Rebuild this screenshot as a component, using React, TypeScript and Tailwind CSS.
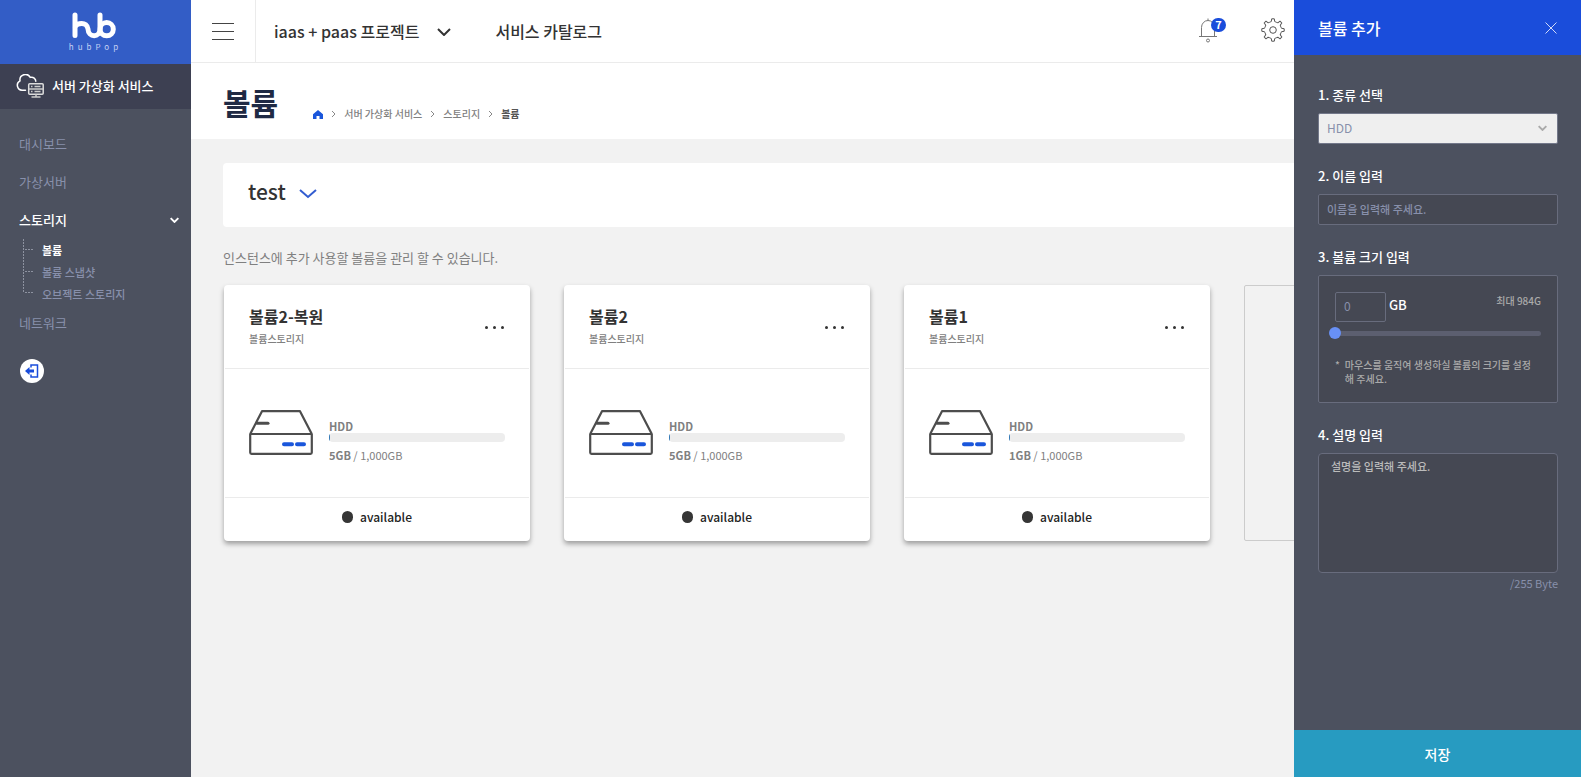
import { useState } from "react";

const volumes = [
  { name: "볼륨2-복원", used: 5 },
  { name: "볼륨2", used: 5 },
  { name: "볼륨1", used: 1 },
];

function Chevron({ className }: { className: string }) {
  return (
    <svg viewBox="0 0 14 8" className={className} fill="none" stroke="currentColor" aria-hidden="true">
      <path d="M1 1l6 6 6-6" />
    </svg>
  );
}

function Logo() {
  return (
    <svg viewBox="0 0 44 27" className="h-[27px] w-11" fill="none" stroke="#fff" strokeWidth="5" strokeLinecap="round" aria-label="hub" role="img">
      <path d="M3 3v20.500M3 15.500c1.500-5 12-6.500 13 1.500 .3 9 12 9 12 0V3" />
      <circle cx="34.700" cy="17.200" r="6.600" />
    </svg>
  );
}

function CloudServerIcon() {
  return (
    <svg viewBox="0 0 28 24" className="h-6 w-7 shrink-0" fill="none" stroke="#fff" strokeWidth="1.500" aria-hidden="true">
      <path d="M9.500 16.200H6a5 5 0 0 1-2-9.400 5.500 5.500 0 0 1 10.300-3.400c3-.8 5.500 1.200 5.500 3.900" strokeLinecap="round" />
      <rect x="12.700" y="9.700" width="14.500" height="10.500" rx="1" stroke="#ddd" />
      <path d="M13 15h14M20 20v2.500M15.500 23h9M18.500 12.400h6M18.500 17.500h6M15 12.400h1.500M15 17.500h1.500" stroke="#ccc" />
    </svg>
  );
}

function BellIcon() {
  return (
    <svg viewBox="0 0 18 25" className="h-[25px] w-[18px]" fill="none" stroke="#777" aria-hidden="true">
      <path d="M9 .5v2M2.500 18V9.500a6.500 7 0 0 1 13 0V18M0 18.500h18" />
      <circle cx="9" cy="22.500" r="1.500" />
    </svg>
  );
}

const gearTeeth = [0, 45, 90, 135, 180, 225, 270, 315];

function GearIcon() {
  return (
    <svg viewBox="0 0 24 24" className="h-6 w-6" fill="none" stroke="#555" strokeLinejoin="round" aria-hidden="true">
      {gearTeeth.map((angle) => (
        <path key={angle} d="M8.750 4.150Q10 3.700 10.300 3.500L10.700 .8h2.600l.4 2.700Q14 3.700 15.250 4.150" transform={`rotate(${angle} 12 12)`} />
      ))}
      <circle cx="12" cy="12" r="3.300" />
    </svg>
  );
}

function DiskIcon() {
  return (
    <svg viewBox="0 0 64 45" className="h-[45px] w-16 shrink-0" fill="none" stroke="#4d4d4d" strokeWidth="2.200" strokeLinejoin="round" aria-hidden="true">
      <path d="M1.200 24v18.500a1.300 1.300 0 0 0 1.300 1.300h59a1.300 1.300 0 0 0 1.300-1.300V24zM1.200 24L13 1.200h38L62.800 24" />
      <path d="M8 13.300h11" strokeWidth="3" strokeLinecap="round" />
      <path d="M35 34.200h8M48 34.200h7" stroke="#1a56db" strokeWidth="4" strokeLinecap="round" />
    </svg>
  );
}

function Sidebar() {
  const link = "block text-[13px] leading-[38px] text-[#8890ab]";
  return (
    <aside className="flex w-[191px] shrink-0 flex-col bg-[#4c515f]">
      <a href="#home" className="flex h-16 flex-col items-center bg-[#335dc6] pr-1 pt-3 text-white">
        <Logo />
        <span className="mt-1 pl-1 text-[8px] leading-[8px] tracking-[4px] text-[#c5d2f5]">hubPop</span>
      </a>
      <div className="flex h-[45px] items-center gap-2 bg-[#3d4052] pb-[2px] pl-4 text-[13px] font-medium text-white">
        <CloudServerIcon />
        <span>서버 가상화 서비스</span>
      </div>
      <nav className="px-[19px] pt-4">
        <a href="#dashboard" className={link}>대시보드</a>
        <a href="#servers" className={link}>가상서버</a>
        <a href="#storage" className="flex items-center justify-between text-[13px] font-medium leading-[38px] text-white">
          스토리지
          <Chevron className="-mr-[7px] h-[6px] w-[9px] stroke-[3]" />
        </a>
        <ul className="flex pb-2 text-[11px] font-medium leading-[22px] text-[#8890ab]">
          <li aria-hidden="true">
            <svg viewBox="0 0 11 66" className="ml-1 h-[66px] w-[11px]" fill="none" stroke="#8d92a0" strokeDasharray="2 1">
              <path d="M.5 0v54M2 10.500h9M2 32.500h9M2 53.500h9" />
            </svg>
          </li>
          <li className="pl-2">
            <a href="#volume" className="block font-bold text-white">볼륨</a>
            <a href="#snapshot" className="block">볼륨 스냅샷</a>
            <a href="#object" className="block">오브젝트 스토리지</a>
          </li>
        </ul>
        <a href="#network" className="block text-[13px] leading-5 text-[#8890ab]">네트워크</a>
        <button aria-label="나가기" className="ml-px mt-[26px] flex h-6 w-6 items-center justify-center rounded-full bg-white">
          <svg viewBox="0 0 14 14" className="h-3.5 w-3.5" fill="none" stroke="#1a4ddb" strokeWidth="1.500" aria-hidden="true">
            <path d="M6 3.500V1h6.500v12H6v-2.500" />
            <path d="M0 7l4.500-4v2.500H9v3H4.500V11z" fill="#1a4ddb" stroke="none" />
          </svg>
        </button>
      </nav>
    </aside>
  );
}

function TopBar() {
  return (
    <header className="flex h-[63px] items-center border-b border-[#ebebeb] bg-white text-[#333]">
      <button aria-label="메뉴" className="flex h-full w-[65px] flex-col justify-center gap-[7px] border-r border-[#ebebeb] px-[21px]">
        <span className="h-px w-[22px] bg-[#444]" />
        <span className="h-px w-[22px] bg-[#444]" />
        <span className="h-px w-[22px] bg-[#444]" />
      </button>
      <button className="ml-[18px] flex items-center gap-[18px] text-base font-medium">
        iaas + paas 프로젝트
        <Chevron className="mt-[2px] h-2 w-3.5 stroke-2" />
      </button>
      <a href="#catalog" className="ml-11 text-base font-medium">서비스 카탈로그</a>
      <div className="ml-auto flex items-center gap-11 pb-[2px] pr-[296px]">
        <button aria-label="알림 7" className="relative">
          <BellIcon />
          <span className="absolute -right-[9px] top-0 flex h-3.5 w-[15px] items-center justify-center rounded-full bg-[#1a4ddb] text-[11px] font-bold text-white">7</span>
        </button>
        <button aria-label="설정"><GearIcon /></button>
      </div>
    </header>
  );
}

function CrumbArrow() {
  return <Chevron className="mx-[7px] h-1 w-[7px] -rotate-90 stroke-2 text-[#888]" />;
}

function Breadcrumb() {
  return (
    <nav aria-label="경로" className="flex items-center text-[10px] font-medium leading-[14px] text-[#808080]">
      <a href="#home" aria-label="홈">
        <svg viewBox="0 0 10 9" className="h-[9px] w-2.5" fill="#1a56db" aria-hidden="true">
          <path d="M5 0l5 4.300V9H6.500V6h-3v3H0V4.300z" />
        </svg>
      </a>
      <CrumbArrow />
      <a href="#iaas">서버 가상화 서비스</a>
      <CrumbArrow />
      <a href="#storage">스토리지</a>
      <CrumbArrow />
      <span className="font-bold text-[#555]">볼륨</span>
    </nav>
  );
}

function VolumeCard({ name, used }: { name: string; used: number }) {
  return (
    <article className="flex h-64 flex-col rounded bg-white px-px shadow-[0_3px_5px_rgba(0,0,0,0.35)]">
      <div className="flex h-[84px] items-center justify-between border-b border-[#ebebeb] px-6">
        <div>
          <h2 className="text-base font-bold leading-6 text-[#333]">{name}</h2>
          <p className="text-[10px] font-medium leading-[22px] text-[#808080]">볼륨스토리지</p>
        </div>
        <button aria-label={name + " 더보기"} className="mr-px flex gap-[5px] pt-[2px]">
          <span className="h-[3px] w-[3px] rounded-full bg-[#333]" />
          <span className="h-[3px] w-[3px] rounded-full bg-[#333]" />
          <span className="h-[3px] w-[3px] rounded-full bg-[#333]" />
        </button>
      </div>
      <div className="flex flex-1 items-center gap-4 border-b border-[#ebebeb] px-6 pb-[2px]">
        <DiskIcon />
        <div className="flex-1 pt-4 text-[11px] leading-[14px] text-[#808080]">
          <p className="font-bold">HDD</p>
          <div className="h-[9px] overflow-hidden rounded bg-[#ededed]">
            <div className="h-full bg-[#337ab7]" style={{ width: `${used / 10}%` }} />
          </div>
          <p className="pt-[6px]"><b>{used}GB</b> / 1,000GB</p>
        </div>
      </div>
      <div className="flex h-[43px] items-center justify-center gap-[7px] pb-[6px] text-xs font-medium text-[#222]">
        <span className="h-3 w-[11px] rounded-full bg-[#363636]" />
        available
      </div>
    </article>
  );
}

function Drawer() {
  const [size, setSize] = useState(0);
  const label = "block text-[13px] font-medium leading-5 text-white";
  return (
    <aside className="absolute inset-y-0 right-0 flex w-[287px] flex-col bg-[#4c515f]">
      <div className="flex h-[55px] items-center justify-between bg-[#1a4ddb] px-6 text-white">
        <h2 className="text-base font-medium">볼륨 추가</h2>
        <button aria-label="닫기">
          <svg viewBox="0 0 12 12" className="h-3 w-3" stroke="currentColor" strokeWidth=".8" aria-hidden="true">
            <path d="M.5 .5l11 11M11.500 .5l-11 11" />
          </svg>
        </button>
      </div>
      <form className="flex flex-1 flex-col pl-6 pr-[23px] pt-[30px]">
        <label htmlFor="kind" className={label}>1. 종류 선택</label>
        <div className="relative mt-2">
          <select id="kind" className="block h-[31px] w-full appearance-none rounded-[2px] border border-[#73788a] bg-[#efefef] px-2 pb-[2px] text-xs text-[#8890ab]">
            <option>HDD</option>
          </select>
          <Chevron className="pointer-events-none absolute right-[11px] top-3 h-[6px] w-[9px] stroke-[3] text-[#aaa]" />
        </div>
        <label htmlFor="name" className={label + " mt-[22px]"}>2. 이름 입력</label>
        <input id="name" placeholder="이름을 입력해 주세요." className="mt-2 h-[31px] w-full rounded-[2px] border border-[#686c7d] bg-[#454853] px-2 pb-[2px] text-[11px] font-medium placeholder:text-[#8890ab]" />
        <label htmlFor="size" className={label + " mt-[22px]"}>3. 볼륨 크기 입력</label>
        <div className="mt-2 h-32 rounded-[2px] border border-[#686c7d] bg-[#454853] px-4 pt-4">
          <div className="flex items-start">
            <input id="size" value={size} onChange={(e) => setSize(Number(e.target.value) || 0)} className="h-[30px] w-[51px] rounded-[2px] border border-[#686c7d] bg-transparent px-2 pb-[3px] text-xs text-[#8890ab]" />
            <span className="pl-[3px] pt-[3px] text-[13px] font-medium leading-5 text-white">GB</span>
            <span className="ml-auto text-[10px] font-medium leading-[18px] text-[#aaa]">최대 984G</span>
          </div>
          <div className="relative mt-[9px] h-[5px] rounded-full bg-[#5c5f70]">
            <input
              type="range"
              aria-label="볼륨 크기"
              min={0}
              max={984}
              value={size}
              onChange={(e) => setSize(Number(e.target.value))}
              className="absolute -left-[6px] -top-[4px] h-3 w-[calc(100%+12px)] appearance-none bg-transparent [&::-webkit-slider-thumb]:h-3 [&::-webkit-slider-thumb]:w-3 [&::-webkit-slider-thumb]:appearance-none [&::-webkit-slider-thumb]:rounded-full [&::-webkit-slider-thumb]:bg-[#6890f5]"
            />
          </div>
          <p className="mt-[22px] flex gap-[5px] pr-1 text-[10px] font-medium leading-[14px] text-[#aaa]">
            <span>*</span>
            <span>마우스를 움직여 생성하실 볼륨의 크기를 설정해 주세요.</span>
          </p>
        </div>
        <label htmlFor="memo" className={label + " mt-[22px]"}>4. 설명 입력</label>
        <textarea id="memo" placeholder="설명을 입력해 주세요." className="mt-2 h-[120px] w-full resize-none rounded border border-[#686c7d] bg-[#454853] px-3 py-1 text-[11px] font-medium leading-4 placeholder:text-[#bbb]" />
        <p className="text-right text-[11px] leading-5 text-[#8890ab]">/255 Byte</p>
      </form>
      <button className="h-[47px] bg-[#279bc1] text-sm font-medium text-white">저장</button>
    </aside>
  );
}

export default function App() {
  return (
    <div className="relative flex min-h-screen overflow-hidden bg-[#f2f2f2] font-['Noto_Sans_CJK_KR','Noto_Sans',sans-serif]">
      <Sidebar />
      <div className="min-w-0 flex-1">
        <TopBar />
        <div className="flex h-[76px] items-center gap-[35px] bg-white px-8 pt-[2px]">
          <h1 className="text-3xl font-bold text-[#1f2a44]">볼륨</h1>
          <div className="pt-6"><Breadcrumb /></div>
        </div>
        <main className="px-8 pt-6">
          <div className="h-16 rounded bg-white px-[25px] pt-3">
            <button className="flex items-center gap-[13px] text-[21px] font-medium leading-8 text-[#333]">
              test
              <svg viewBox="0 0 18 10" className="mt-[6px] h-2.5 w-[18px]" fill="none" stroke="#335dd0" strokeWidth="2" aria-hidden="true">
                <path d="M1 1l8 7 8-7" />
              </svg>
            </button>
          </div>
          <p className="pt-[21px] text-[13px] leading-5 text-[#808080]">인스턴스에 추가 사용할 볼륨을 관리 할 수 있습니다.</p>
          <div className="-mr-px grid grid-cols-4 gap-[34px] pl-px pt-[17px]">
            {volumes.map((v) => (
              <VolumeCard key={v.name} name={v.name} used={v.used} />
            ))}
            <button aria-label="볼륨 추가" className="h-64 rounded-[2px] border border-[#ccc]" />
          </div>
        </main>
      </div>
      <Drawer />
    </div>
  );
}
